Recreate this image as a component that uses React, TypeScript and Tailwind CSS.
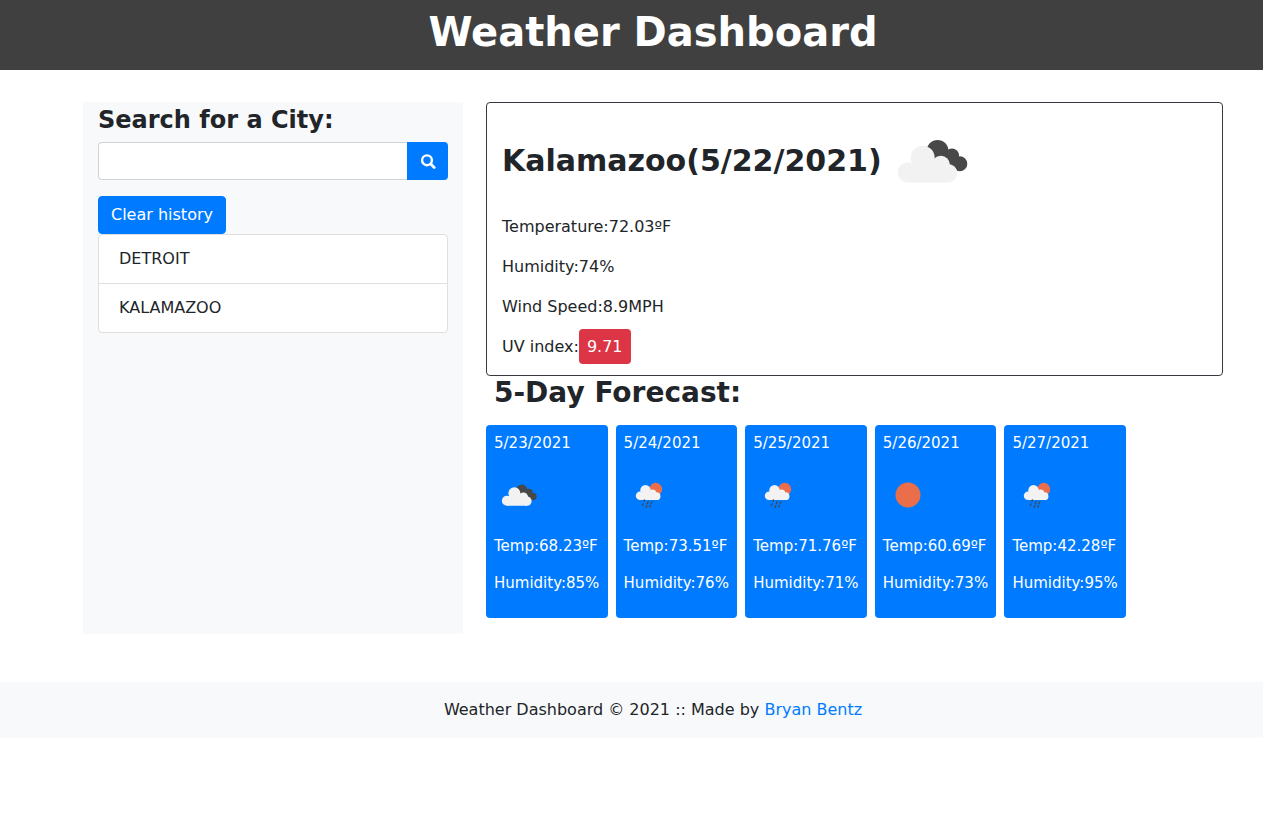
import { useState } from "react";
import type { FormEvent } from "react";

type Condition = "clouds" | "rain" | "clear";

interface Day {
  date: string;
  condition: Condition;
  temp: string;
  humidity: string;
}

const forecast: Day[] = [
  { date: "5/23/2021", condition: "clouds", temp: "68.23", humidity: "85" },
  { date: "5/24/2021", condition: "rain", temp: "73.51", humidity: "76" },
  { date: "5/25/2021", condition: "rain", temp: "71.76", humidity: "71" },
  { date: "5/26/2021", condition: "clear", temp: "60.69", humidity: "73" },
  { date: "5/27/2021", condition: "rain", temp: "42.28", humidity: "95" },
];

function SearchIcon() {
  return (
    <svg viewBox="0 0 16 16" className="size-4" fill="none" stroke="currentColor" aria-hidden="true">
      <circle cx="7" cy="7.3" r="4.9" strokeWidth="2.4" />
      <path d="M10.8 11.1L14.2 14.5" strokeWidth="2.8" strokeLinecap="round" />
    </svg>
  );
}

function CloudsDrawing() {
  return (
    <>
      <g fill="#484848">
        <circle cx="55.6" cy="39.7" r="10.8" />
        <circle cx="70" cy="44.4" r="7" />
        <circle cx="77.8" cy="52.8" r="7.5" />
        <path d="M50 46L65 38L76.5 45L78 60L66 58Z" />
      </g>
      <g fill="#f2f2f2">
        <circle cx="40.7" cy="46.7" r="12" />
        <circle cx="25.8" cy="61.4" r="10.1" />
        <circle cx="58.8" cy="54" r="9.2" />
        <circle cx="66" cy="62.2" r="9.3" />
        <path d="M26 52H62V56H66V71.5H26Z" />
      </g>
    </>
  );
}

function RainDrawing() {
  return (
    <>
      <circle cx="63.5" cy="38.5" r="12.8" fill="#eb6e4b" />
      <g fill="#f2f2f2">
        <circle cx="43" cy="40.5" r="10.4" />
        <circle cx="32.2" cy="51.6" r="8.6" />
        <circle cx="57" cy="46.5" r="7.6" />
        <circle cx="65" cy="52.3" r="7.9" />
        <path d="M32 44H60V46H65V60.2H32Z" />
      </g>
      <g stroke="#484848" strokeWidth="2.6" strokeLinecap="round">
        <path d="M41 60L39.5 62M48.5 63.5L46.5 67.5M56 63.5L54 67M38 68L36.5 71M45.5 71.5L44 74.5M53 70.5L51.5 74" />
      </g>
    </>
  );
}

function WeatherIcon({ condition, className }: { condition: Condition; className: string }) {
  return (
    <svg viewBox="0 0 100 100" className={className} role="img" aria-label={condition}>
      {condition === "clouds" && <CloudsDrawing />}
      {condition === "rain" && <RainDrawing />}
      {condition === "clear" && <circle cx="50" cy="50" r="25" fill="#eb6e4b" />}
    </svg>
  );
}

function SearchPanel() {
  const [city, setCity] = useState("");
  const [history, setHistory] = useState(["DETROIT", "KALAMAZOO"]);

  function submit(event: FormEvent) {
    event.preventDefault();
    const name = city.trim().toUpperCase();
    if (name && !history.includes(name)) setHistory([...history, name]);
    setCity("");
  }

  return (
    <aside className="bg-[#f8f9fa] px-[15px] md:w-1/3">
      <form onSubmit={submit}>
        <label htmlFor="city" className="block pt-1 pb-2 text-2xl leading-7 font-bold">
          Search for a City:
        </label>
        <div className="mb-4 flex h-[38px]">
          <input
            id="city"
            type="text"
            value={city}
            onChange={(event) => setCity(event.target.value)}
            className="min-w-0 flex-1 rounded-l border border-r-0 border-[#ced4da] bg-white px-3"
          />
          <button
            type="submit"
            aria-label="Search"
            className="flex w-[41px] items-center justify-center rounded-r bg-[#007bff] text-white"
          >
            <SearchIcon />
          </button>
        </div>
      </form>
      <button
        type="button"
        onClick={() => setHistory([])}
        className="block h-[38px] rounded border border-[#007bff] bg-[#007bff] px-3 text-white"
      >
        Clear history
      </button>
      {history.length > 0 && (
        <ul className="divide-y divide-[#dfdfdf] rounded border border-[#dfdfdf] bg-white">
          {history.map((name) => (
            <li key={name} className="px-5 py-3">
              {name}
            </li>
          ))}
        </ul>
      )}
    </aside>
  );
}

function CurrentWeather() {
  return (
    <section className="rounded border border-[#343a40] px-[15px] pt-2">
      <div className="mb-1 flex items-center">
        <h2 className="text-3xl leading-9 font-bold">Kalamazoo(5/22/2021)</h2>
        <WeatherIcon condition="clouds" className="size-[100px] shrink-0" />
      </div>
      <p className="mb-4">Temperature:72.03ºF</p>
      <p className="mb-4">Humidity:74%</p>
      <p className="mb-4">Wind Speed:8.9MPH</p>
      <p className="mb-4">
        UV index:<span className="rounded bg-[#dc3545] p-2 text-white">9.71</span>
      </p>
    </section>
  );
}

function ForecastCard({ day }: { day: Day }) {
  return (
    <li className="rounded bg-[#007bff] p-2 text-[15px] leading-[21px] whitespace-nowrap text-white">
      <p className="mb-4">{day.date}</p>
      <WeatherIcon condition={day.condition} className="mb-4 size-[50px]" />
      <p className="mb-4">Temp:{day.temp}ºF</p>
      <p className="mb-4">Humidity:{day.humidity}%</p>
    </li>
  );
}

export default function App() {
  return (
    <div className="min-h-screen bg-white font-[Verdana,'DejaVu_Sans',sans-serif] text-base text-[#212529]">
      <header className="bg-[#404040] pt-2 pb-[14px] pl-[43px] text-center text-white">
        <h1 className="text-[40px] leading-[48px] font-bold">Weather Dashboard</h1>
      </header>

      <div className="pt-8 pl-[43px]">
        <main className="mx-auto flex max-w-[1140px] flex-col md:flex-row">
          <SearchPanel />
          <div className="min-w-0 flex-1 pb-4 md:pl-[23px]">
            <CurrentWeather />
            <section>
              <h2 className="mb-[15px] pl-2 text-[28px] leading-[34px] font-bold">5-Day Forecast:</h2>
              <ul className="grid max-w-[640px] grid-cols-2 gap-2 sm:grid-cols-5">
                {forecast.map((day) => (
                  <ForecastCard key={day.date} day={day} />
                ))}
              </ul>
            </section>
          </div>
        </main>
      </div>

      <footer className="mt-12 bg-[#f8f9fa] py-4 pl-[43px] text-center">
        Weather Dashboard © 2021 :: Made by{" "}
        <a href="#bryan-bentz" className="text-[#007bff]">
          Bryan Bentz
        </a>
      </footer>
    </div>
  );
}
